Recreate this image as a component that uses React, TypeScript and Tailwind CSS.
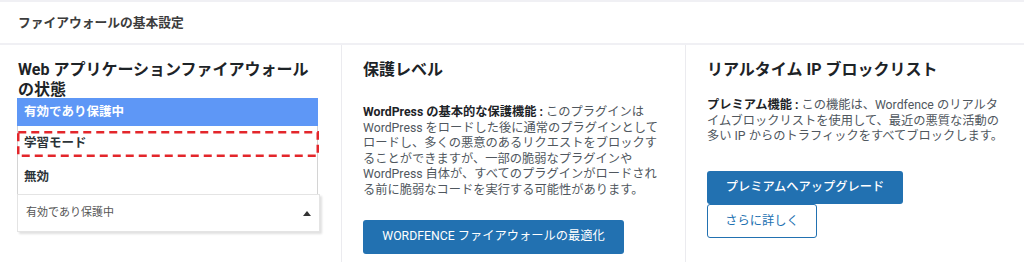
import React from "react";

export default function App() {
  return (
    <div className="w-[1024px] h-[270px] bg-white overflow-hidden font-['Roboto','Noto_Sans_CJK_JP',sans-serif]">
      <div className="border-t-2 border-[#f0f0f4] h-[43px] flex items-center pl-[18px] text-[12.75px] font-bold text-[#3c3c3c]">
        ファイアウォールの基本設定
      </div>
      <div className="border-t-2 border-[#f0f0f4] h-[219px] grid grid-cols-[341px_344px_339px]">
        {/* Column 1 */}
        <div className="pl-[17px] pt-[15px] flex flex-col items-start">
          <h3 className="pl-px text-[16px] leading-[20px] font-bold text-[#1d2327]">
            Web アプリケーションファイアウォール
            <br />
            の状態
          </h3>
          <div className="-mt-[2px] w-[301px] flex flex-col text-[12.5px] font-semibold text-[#2c3338]">
            <div className="h-[28px] bg-[#5e97f6] text-white pl-[7px] flex items-center">
              有効であり保護中
            </div>
            <div className="relative h-[34px] border-x border-[#d4d4d4] pl-[6px] flex items-center">
              学習モード
              <svg
                className="absolute left-[-1px] top-[5px]"
                width="302"
                height="26"
                viewBox="0 0 302 26"
              >
                <rect
                  x="1.25"
                  y="1.25"
                  width="299.5"
                  height="23.5"
                  fill="none"
                  stroke="#e3262b"
                  strokeWidth="2.5"
                  strokeDasharray="8 5"
                />
              </svg>
            </div>
            <div className="h-[34px] border-x border-[#d4d4d4] pl-[6px] flex items-center">
              無効
            </div>
          </div>
          <div className="w-[303px] h-[38px] bg-white border border-[#e4e4e4] shadow-[2px_2px_2px_rgba(0,0,0,0.12)] flex items-center justify-between pl-[8px] pr-[8px] text-[11px] text-[#555]">
            <span>有効であり保護中</span>
            <svg width="8" height="6" viewBox="0 0 8 6">
              <path d="M0 6 L4 1 L8 6 Z" fill="#333" />
            </svg>
          </div>
        </div>

        {/* Column 2 */}
        <div className="border-l border-[#ebebef] pl-[21px] pr-[22px] pt-[15px] flex flex-col items-start">
          <h3 className="text-[16px] leading-[20px] font-bold text-[#1d2327]">保護レベル</h3>
          <p className="mt-[25px] text-[12.25px] leading-[15.6px] text-[#50575e]">
            <strong className="font-bold text-[#1d2327]">WordPress の基本的な保護機能 :</strong>{" "}
            このプラグインは WordPress をロードした後に通常のプラグインとしてロードし、多くの悪意のあるリクエストをブロックすることができますが、一部の脆弱なプラグインや WordPress 自体が、すべてのプラグインがロードされる前に脆弱なコードを実行する可能性があります。
          </p>
          <button className="mt-[21px] h-[34px] w-[261px] bg-[#2271b1] rounded-[3px] text-white text-[12.25px] flex items-center justify-center">
            WORDFENCE ファイアウォールの最適化
          </button>
        </div>

        {/* Column 3 */}
        <div className="border-l border-[#ebebef] pl-[21px] pr-[17px] pt-[15px] flex flex-col items-start">
          <h3 className="text-[16px] leading-[20px] font-bold text-[#1d2327]">リアルタイム IP ブロックリスト</h3>
          <p className="mt-[18px] text-[12.25px] leading-[15.6px] text-[#50575e]">
            <strong className="font-bold text-[#1d2327]">プレミアム機能 :</strong>{" "}
            この機能は、Wordfence のリアルタイムブロックリストを使用して、最近の悪質な活動の多い IP からのトラフィックをすべてブロックします。
          </p>
          <button className="mt-[26px] h-[33px] w-[196px] bg-[#2271b1] rounded-[3px] text-white text-[12.25px] font-medium flex items-center justify-center">
            プレミアムへアップグレード
          </button>
          <button className="h-[34px] w-[110px] bg-white border border-[#2271b1] rounded-[3px] text-[#2271b1] text-[12.25px] flex items-center justify-center">
            さらに詳しく
          </button>
        </div>
      </div>
    </div>
  );
}
